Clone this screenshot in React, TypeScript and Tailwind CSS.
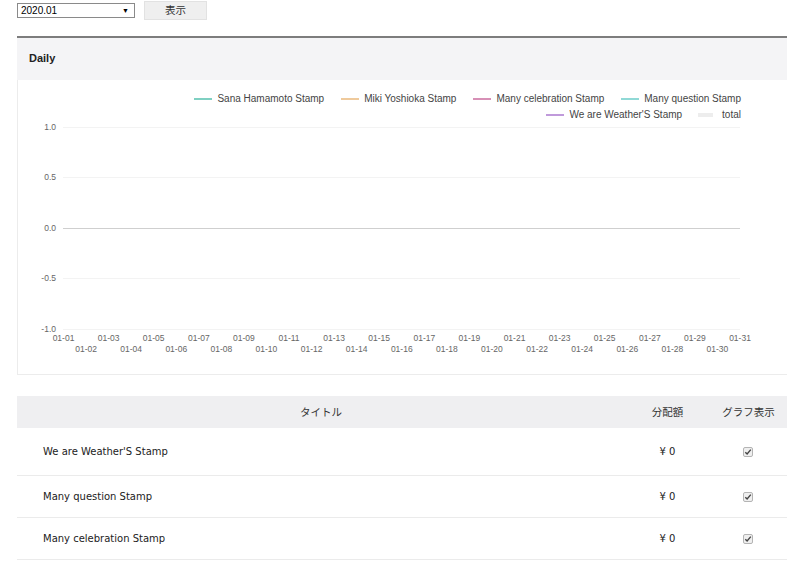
import React from "react";

const legendRow1 = [
  { label: "Sana Hamamoto Stamp", color: "#7fd0c2" },
  { label: "Miki Yoshioka Stamp", color: "#efca9c" },
  { label: "Many celebration Stamp", color: "#d790b6" },
  { label: "Many question Stamp", color: "#90d9d6" },
];

const rows = [
  { title: "We are Weather'S Stamp", h: "h-[48px]" },
  { title: "Many question Stamp", h: "h-[42px]" },
  { title: "Many celebration Stamp", h: "h-[42px]" },
];

const yTicks = ["1.0", "0.5", "0.0", "-0.5", "-1.0"];
const days = Array.from({ length: 31 }, (_, i) => i + 1);

function LegendItem({ label, color }: { label: string; color: string }) {
  return (
    <div className="flex items-center gap-[5px]">
      <span className="block w-[18px] h-[2px]" style={{ backgroundColor: color }} />
      <span>{label}</span>
    </div>
  );
}

function Check() {
  return (
    <span className="inline-flex items-center justify-center w-[10px] h-[10px] border border-[#b4b4b4] rounded-[2px] bg-[#efefef]">
      <svg width="8" height="8" viewBox="0 0 8 8">
        <path d="M1.3 4.2 L3.1 6 L6.8 1.6" fill="none" stroke="#444" strokeWidth="1.4" />
      </svg>
    </span>
  );
}

export default function App() {
  return (
    <div className="w-[800px] h-[565px] bg-white overflow-hidden font-['Liberation_Sans','Noto_Sans_CJK_JP',sans-serif] text-[#333]">
      {/* top controls */}
      <div className="flex items-start pl-[17px]">
        <div className="mt-[3px] w-[118px] h-[15px] border border-[#8a8a8a] flex items-center justify-between pl-[3px] pr-[5px] text-[10px] text-black leading-none">
          <span>2020.01</span>
          <span className="text-[7px]">▼</span>
        </div>
        <div className="ml-[9px] mt-[1px] w-[63px] h-[19px] bg-[#efefef] border border-[#e2e2e2] flex items-center justify-center text-[10.5px] text-[#333] font-['Noto_Sans_CJK_JP',sans-serif] leading-none">
          表示
        </div>
      </div>

      {/* chart panel */}
      <div className="mt-[16px] ml-[17px] w-[770px]">
        <div className="border-t-2 border-[#7d7d7d] bg-[#f4f4f6] h-[44px] flex items-center pl-[12px] pb-[1px] text-[11px] font-bold text-[#222]">
          Daily
        </div>
        <div className="border-l border-b border-[#ececec]">
          <div className="pt-[11px] pr-[46px] text-[10px] text-[#444] leading-[16px]">
            <div className="flex justify-end gap-[17px]">
              {legendRow1.map((l) => (
                <LegendItem key={l.label} label={l.label} color={l.color} />
              ))}
            </div>
            <div className="flex justify-end gap-[16px]">
              <LegendItem label="We are Weather'S Stamp" color="#c09adb" />
              <div className="flex items-center gap-[9px]">
                <span className="block w-[15px] h-[4px] bg-[#ededed]" />
                <span>total</span>
              </div>
            </div>
          </div>
          <svg width="769" height="251" className="block" fontFamily="'Liberation Sans', sans-serif">
            {yTicks.map((t, i) => {
              const y = 3.5 + 50.5 * i;
              const yy = Math.round(y) + 0.5;
              return (
                <g key={t}>
                  <line x1={45} x2={722} y1={yy} y2={yy} stroke={t === "0.0" ? "#cfcfcf" : "#f3f3f3"} strokeWidth={1} />
                  <text x={38} y={yy} textAnchor="end" dominantBaseline="middle" fontSize="8.5" fill="#666">
                    {t}
                  </text>
                </g>
              );
            })}
            {days.map((d) => {
              const x = 45.5 + 22.55 * (d - 1);
              const y = d % 2 === 1 ? 216 : 227;
              return (
                <text key={d} x={x} y={y} textAnchor="middle" dominantBaseline="middle" fontSize="8.5" fill="#666">
                  {`01-${String(d).padStart(2, "0")}`}
                </text>
              );
            })}
          </svg>
        </div>
      </div>

      {/* table */}
      <div className="mt-[21px] ml-[17px] w-[770px]">
        <div className="grid grid-cols-[608px_85px_77px] h-[32px] bg-[#efeff1] items-center text-[10.5px] text-[#333] font-['Noto_Sans_CJK_JP',sans-serif]">
          <div className="text-center">タイトル</div>
          <div className="text-center">分配額</div>
          <div className="text-center">グラフ表示</div>
        </div>
        {rows.map((r) => (
          <div
            key={r.title}
            className={`grid grid-cols-[608px_85px_77px] items-center border-b border-[#ebebeb] text-[10px] text-[#222] font-['DejaVu_Sans',sans-serif] ${r.h}`}
          >
            <div className="pl-[26px]">{r.title}</div>
            <div className="text-center">¥ 0</div>
            <div className="flex justify-center pr-[2px]">
              <Check />
            </div>
          </div>
        ))}
      </div>
    </div>
  );
}
